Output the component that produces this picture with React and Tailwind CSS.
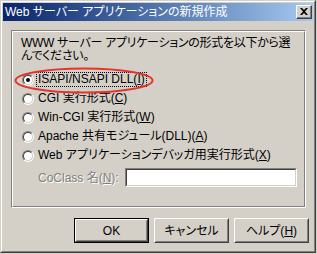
import React from "react";

const font = {
  fontFamily: '"Liberation Sans", "Noto Sans CJK JP", sans-serif',
};

function Radio({ checked }) {
  return (
    <div className="relative w-[12px] h-[12px] shrink-0 rounded-full border border-t-[#808080] border-l-[#808080] border-r-white border-b-white">
      <div className="w-full h-full rounded-full border border-t-[#404040] border-l-[#404040] border-r-[#d4d0c8] border-b-[#d4d0c8] bg-white flex items-center justify-center">
        {checked && <div className="w-[4px] h-[4px] rounded-full bg-black" />}
      </div>
    </div>
  );
}

function Option({ checked, focused, children }) {
  return (
    <div className="flex items-center h-[19px] pl-[9px]">
      <Radio checked={checked} />
      <span
        className={
          "ml-[3px] px-[1px] leading-[13px] whitespace-nowrap " +
          (focused ? "outline outline-1 outline-dotted outline-black" : "")
        }
      >
        {children}
      </span>
    </div>
  );
}

function Button({ isDefault, children }) {
  return (
    <div
      className={
        "w-[75px] h-[25px] " +
        (isDefault ? "border border-black" : "")
      }
    >
      <div className="w-full h-full border border-t-white border-l-white border-r-[#404040] border-b-[#404040]">
        <div className="w-full h-full border border-t-[#d4d0c8] border-l-[#d4d0c8] border-r-[#808080] border-b-[#808080] flex items-center justify-center">
          {children}
        </div>
      </div>
    </div>
  );
}

export default function App() {
  return (
    <div
      className="w-[317px] h-[254px] bg-[#d4d0c8] text-[12px] text-black [font-feature-settings:'palt']"
      style={font}
    >
      <div className="w-[316px] h-[253px] border border-t-[#d4d0c8] border-l-[#d4d0c8] border-r-[#404040] border-b-[#404040]">
        <div className="w-full h-full border border-t-white border-l-white border-r-[#808080] border-b-[#808080] p-[1px] flex flex-col">
          {/* Title bar */}
          <div className="h-[18px] flex items-center bg-gradient-to-r from-[#0a246a] to-[#a6caf0]">
            <span className="pl-[2px] text-white leading-[14px] whitespace-nowrap">
              Web サーバー アプリケーションの新規作成
            </span>
            <div className="ml-auto mr-[1px] w-[16px] h-[14px] bg-[#d4d0c8] border border-t-white border-l-white border-r-[#404040] border-b-[#404040]">
              <div className="w-full h-full border-r border-b border-[#808080] flex items-center justify-center">
                <svg width="8" height="7" viewBox="0 0 8 7">
                  <path d="M0 0h2l2 2 2-2h2L5 3.5 8 7H6L4 5 2 7H0l3-3.5z" fill="#000" />
                </svg>
              </div>
            </div>
          </div>

          {/* Group box */}
          <div className="mt-[9px] ml-[8px] w-[295px] h-[178px] border border-t-[#808080] border-l-[#808080] border-r-white border-b-white">
            <div className="relative w-full h-full border border-t-white border-l-white border-r-[#808080] border-b-[#808080] pt-[5px]">
              <p className="pl-[8px] leading-[13px] whitespace-nowrap tracking-[-0.3px]">
                WWW サーバー アプリケーションの形式を以下から選
                <br />
                んでください。
              </p>
              <div className="mt-[7px] flex flex-col">
                <Option checked focused>
                  ISAPI/NSAPI DLL(<u>I</u>)
                </Option>
                <Option>
                  CGI 実行形式(<u>C</u>)
                </Option>
                <Option>
                  Win-CGI 実行形式(<u>W</u>)
                </Option>
                <Option>
                  Apache 共有モジュール(DLL)(<u>A</u>)
                </Option>
                <Option>
                  Web アプリケーションデバッガ用実行形式(<u>X</u>)
                </Option>
              </div>
              <div className="mt-[3px] flex items-center">
                <span className="ml-[25px] w-[87px] whitespace-nowrap text-[#808080] [text-shadow:1px_1px_0_#fff]">
                  CoClass 名(<u>N</u>):
                </span>
                <div className="w-[172px] h-[19px] border border-t-[#808080] border-l-[#808080] border-r-white border-b-white">
                  <div className="w-full h-full bg-white border border-t-[#404040] border-l-[#404040] border-r-[#d4d0c8] border-b-[#d4d0c8]" />
                </div>
              </div>
              {/* Red annotation ellipse */}
              <svg
                className="absolute left-[1px] top-[35px] pointer-events-none"
                width="140"
                height="27"
                viewBox="0 0 140 27"
              >
                <ellipse cx="70" cy="13.5" rx="68.5" ry="12" fill="none" stroke="#e3342c" strokeWidth="2" />
              </svg>
            </div>
          </div>

          {/* Buttons */}
          <div className="mt-[10px] flex justify-end gap-[5px] pr-[4px]">
            <Button isDefault>OK</Button>
            <Button>キャンセル</Button>
            <Button>
              ヘルプ(<u>H</u>)
            </Button>
          </div>
        </div>
      </div>
    </div>
  );
}
